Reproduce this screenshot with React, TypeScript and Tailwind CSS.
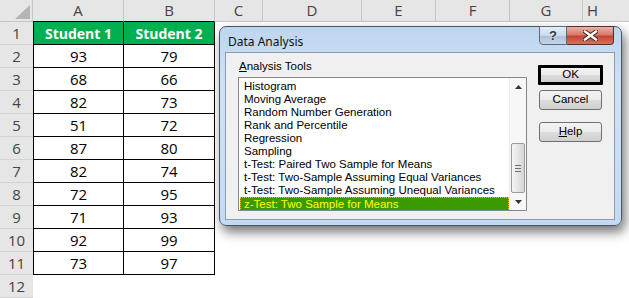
import React from 'react';

const scores = [
  ['93', '79'],
  ['68', '66'],
  ['82', '73'],
  ['51', '72'],
  ['87', '80'],
  ['82', '74'],
  ['72', '95'],
  ['71', '93'],
  ['92', '99'],
  ['73', '97'],
];

const tools = [
  'Histogram',
  'Moving Average',
  'Random Number Generation',
  'Rank and Percentile',
  'Regression',
  'Sampling',
  't-Test: Paired Two Sample for Means',
  't-Test: Two-Sample Assuming Equal Variances',
  't-Test: Two-Sample Assuming Unequal Variances',
  'z-Test: Two Sample for Means',
];

function RowHead({ n }: { n: number }) {
  return (
    <div className="w-[33px] h-[23px] shrink-0 bg-[#e6e6e6] border-b border-[#d2d2d2] flex items-center justify-center text-[#444]">
      {n}
    </div>
  );
}

function DlgButton({ children, def }: { children: React.ReactNode; def?: boolean }) {
  return (
    <div
      className={
        def
          ? 'w-[65px] h-[20px] border-[3px] border-black rounded-[1px] bg-[linear-gradient(180deg,#f3f3f3_0%,#ebebeb_50%,#dddddd_51%,#cfcfcf_100%)] flex items-center justify-center'
          : 'ml-px w-[63px] h-[20px] border border-[#707070] rounded-[3px] bg-[linear-gradient(180deg,#f3f3f3_0%,#ebebeb_50%,#dddddd_51%,#cfcfcf_100%)] flex items-center justify-center'
      }
    >
      {children}
    </div>
  );
}

function Dialog() {
  return (
    <div className="absolute left-[219px] top-[26px] w-[403px] h-[200px] rounded-[7px] border border-[#4a5563] bg-[linear-gradient(180deg,#bdd6ef_0%,#cfe2f5_30%,#c3dbf2_100%)] shadow-[3px_6px_12px_rgba(0,0,0,0.55)] flex flex-col font-['Liberation_Sans',sans-serif] text-[11.5px] text-black">
      {/* title bar */}
      <div className="h-[25px] flex shrink-0">
        <div className="pl-[8px] pt-[6px] font-['Noto_Sans',sans-serif] text-[12px] leading-[18px] text-[#111]">Data Analysis</div>
        <div className="ml-auto mr-[7px] -mt-px flex self-start">
          <div className="w-[28px] h-[19px] rounded-bl-[4px] border border-[#5b6b7c] bg-[linear-gradient(180deg,#e4eef8_0%,#c9d9ea_50%,#aebfd3_51%,#c4d6ea_100%)] flex items-center justify-center">
            <span className="text-[13px] font-bold leading-none text-[#2d3540] [text-shadow:0_0_2px_#fff]">?</span>
          </div>
          <div className="w-[47px] h-[19px] rounded-br-[4px] border border-l-0 border-[#5a2e2a] bg-[linear-gradient(180deg,#eab3a6_0%,#d8796a_45%,#c54533_55%,#d8705c_100%)] flex items-center justify-center">
            <svg width="15" height="11" viewBox="0 0 15 11">
              <path d="M2 1.5 L13 9.5 M13 1.5 L2 9.5" stroke="#3b2522" strokeWidth="4.2" strokeLinecap="square" />
              <path d="M2 1.5 L13 9.5 M13 1.5 L2 9.5" stroke="#fff" strokeWidth="2.4" strokeLinecap="square" />
            </svg>
          </div>
        </div>
      </div>

      {/* body */}
      <div className="flex-1 ml-[5px] mr-[6px] mb-[5px] border border-[#8a9db3] bg-[#f0f0f0] flex pl-[12px] pt-[6px]">
        <div className="w-[289px] flex flex-col">
          <div className="h-[14px] pl-px leading-[14px]">
            <span className="underline underline-offset-1">A</span>nalysis Tools
          </div>
          <div className="mt-[4px] h-[134px] border border-[#828790] bg-white flex">
            <div className="flex-1 pl-px pt-[2px] overflow-hidden">
              {tools.map((t, i) =>
                i === tools.length - 1 ? (
                  <div
                    key={t}
                    className="h-[14px] px-[3px] leading-[12px] whitespace-nowrap bg-[#3a9a00] text-[#ffff00] border border-dotted border-[#e8c000]"
                  >
                    {t}
                  </div>
                ) : (
                  <div key={t} className="h-[13px] px-[4px] leading-[13px] whitespace-nowrap">
                    {t}
                  </div>
                )
              )}
            </div>
            <div className="w-[17px] shrink-0 bg-[#f7f7f7] border-l border-[#ececec] flex flex-col">
              <div className="h-[17px] flex items-center justify-center">
                <svg width="7" height="4" viewBox="0 0 7 4">
                  <path d="M0 4 L3.5 0 L7 4 Z" fill="#333" />
                </svg>
              </div>
              <div className="flex-1 flex flex-col justify-end items-center">
                <div className="w-[14px] h-[50px] rounded-[2px] border border-[#9b9b9b] bg-[linear-gradient(90deg,#f4f4f4,#e2e2e2_60%,#d6d6d6)] flex flex-col items-center justify-center gap-[2px]">
                  <div className="w-[6px] h-px bg-[#707070]" />
                  <div className="w-[6px] h-px bg-[#707070]" />
                  <div className="w-[6px] h-px bg-[#707070]" />
                </div>
              </div>
              <div className="h-[17px] flex items-center justify-center">
                <svg width="7" height="4" viewBox="0 0 7 4">
                  <path d="M0 0 L3.5 4 L7 0 Z" fill="#333" />
                </svg>
              </div>
            </div>
          </div>
        </div>

        <div className="ml-[11px] pt-[6px] flex flex-col">
          <DlgButton def>OK</DlgButton>
          <div className="mt-[5px]">
            <DlgButton>Cancel</DlgButton>
          </div>
          <div className="mt-[12px]">
            <DlgButton>
              <span>
                <span className="underline underline-offset-1">H</span>elp
              </span>
            </DlgButton>
          </div>
        </div>
      </div>
    </div>
  );
}

export default function App() {
  return (
    <div className="relative w-[629px] h-[298px] overflow-hidden bg-white font-['Open_Sans',sans-serif] text-[14px] text-black">
      {/* column headers */}
      <div className="flex h-[22px] bg-[#e6e6e6] text-[15px] text-[#444]">
        <div className="w-[33px] shrink-0 border-r border-b border-[#c6c6c6] flex items-end justify-end pr-[2px] pb-[2px]">
          <svg width="15" height="14" viewBox="0 0 15 14">
            <path d="M15 0 L15 14 L0 14 Z" fill="#b5b5b5" />
          </svg>
        </div>
        <div className="w-[91px] shrink-0 border-r border-[#c6c6c6] border-b border-b-black flex items-center justify-center">A</div>
        <div className="w-[91px] shrink-0 border-r border-[#c6c6c6] border-b border-b-black flex items-center justify-center">B</div>
        <div className="w-[48px] shrink-0 border-r border-b border-[#c6c6c6] flex items-center justify-center">C</div>
        <div className="w-[99px] shrink-0 border-r border-b border-[#c6c6c6] flex items-center justify-center">D</div>
        <div className="w-[74px] shrink-0 border-r border-b border-[#c6c6c6] flex items-center justify-center">E</div>
        <div className="w-[74px] shrink-0 border-r border-b border-[#c6c6c6] flex items-center justify-center">F</div>
        <div className="w-[73px] shrink-0 border-r border-b border-[#c6c6c6] flex items-center justify-center">G</div>
        <div className="w-[60px] shrink-0 border-b border-[#c6c6c6] flex items-center justify-start pl-[4px]">H</div>
      </div>

      {/* row 1 */}
      <div className="flex text-[15px]">
        <RowHead n={1} />
        <div className="w-[91px] h-[23px] shrink-0 border-l border-r border-b border-black bg-[#00b050] text-white text-[14px] font-bold flex items-center justify-center">Student 1</div>
        <div className="w-[91px] h-[23px] shrink-0 border-r border-b border-black bg-[#00b050] text-white text-[14px] font-bold flex items-center justify-center">Student 2</div>
      </div>

      {scores.map(([a, b], i) => (
        <div key={i} className="flex text-[15px]">
          <RowHead n={i + 2} />
          <div className="w-[91px] h-[23px] shrink-0 border-l border-r border-b border-black flex items-center justify-center">{a}</div>
          <div className="w-[91px] h-[23px] shrink-0 border-r border-b border-black flex items-center justify-center">{b}</div>
        </div>
      ))}

      <div className="flex text-[15px]">
        <RowHead n={12} />
      </div>

      <Dialog />
    </div>
  );
}
